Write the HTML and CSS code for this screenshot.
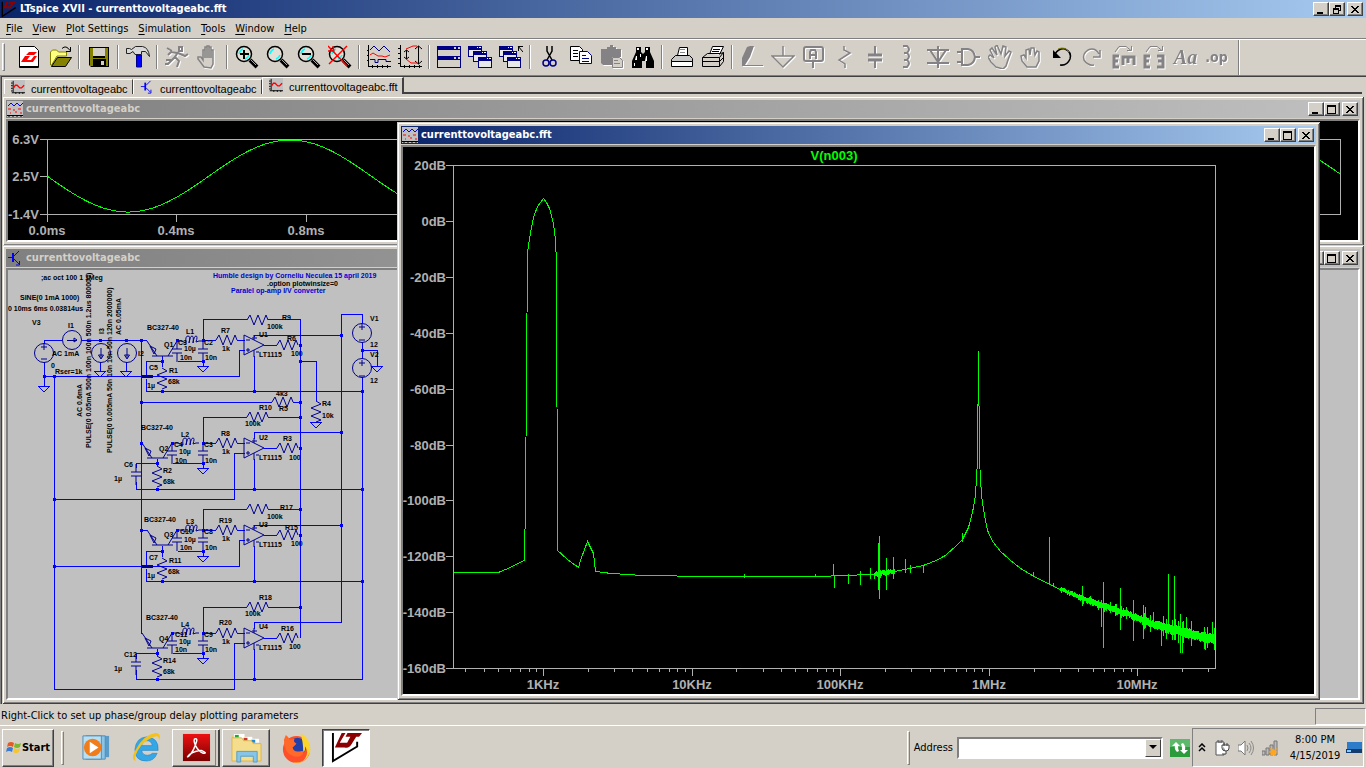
FILE: index.html
```html
<!DOCTYPE html>
<html lang="en">
<head>
<meta charset="utf-8">
<title>LTspice XVII - currenttovoltageabc.fft</title>
<link rel="stylesheet" href="styles.css">
</head>
<body>
<svg class="defs" aria-hidden="true">
  <defs>
    <symbol id="logo" viewBox="0 0 24 24"><path d="M2 1v22L22 10" fill="none" stroke="#000" stroke-width="2"/><path d="M8 1h3L8 8h5l-2 3H3zM12 1h11l-2 3h-2l-4 6q-2 2-4 1l4-7h-4z" fill="#8b0000"/></symbol>
    <symbol id="trace" viewBox="0 0 16 16"><rect width="16" height="16" fill="#c0c0c0"/><path d="M2.500 1v13M0 3.500h2M0 6.500h2M0 9.500h2M0 12.500h2M1 14.500h15M5.500 14v2M9.500 14v2M13.500 14v2" stroke="#000" fill="none"/><path d="M3 9l2-3h2l3 3h2l3-3" stroke="red" stroke-width="1.500" fill="none"/></symbol>
    <symbol id="multi" viewBox="0 0 16 16"><rect width="16" height="16" fill="#c0c0c0"/><path d="M1 5l3-3 3 3 3-3 3 3 3-3" stroke="#00f" fill="none"/><path d="M1 8h3M6 9h2M11 8h3M3 12h1M8 11h2M13 12h2" stroke="red" fill="none"/><path d="M0 14.500h16M2 14v2M6 14v2M10 14v2M14 14v2" stroke="#000"/></symbol>
    <symbol id="npn" viewBox="0 0 16 16"><path d="M1 7.500h5M7 6l5-5M7 9l5 5M12.500 11v4H9" stroke="#00f" fill="none"/><path d="M6 3v9" stroke="#00f" stroke-width="2"/></symbol>
    <symbol id="lens" viewBox="0 0 24 24"><circle cx="9" cy="9" r="7.500" fill="#e4e0d8" stroke="#000" stroke-width="1.500"/><path d="M4 9q1-4 4-5M14 10q-1 3-4 4" stroke="#0ff" stroke-width="1.500" fill="none"/><path d="M15 15l7 7" stroke="#000" stroke-width="4"/><path d="M16 15l5 5" stroke="#aaa"/></symbol>
    <symbol id="pane" viewBox="0 0 14 12"><path d="M0 0h14v11H0z" fill="#000084"/><path d="M1 4h12v6H1z" fill="#e8e8e8"/><path d="M9 1h1v1H9zM11 1h2v1h-2z" fill="#fff"/></symbol>
    <symbol id="min" viewBox="0 0 10 9"><path d="M1 7h6v2H1z"/></symbol>
    <symbol id="max" viewBox="0 0 10 9"><path d="M0 0h9v9H0zM1 2v6h7V2z" fill-rule="evenodd"/></symbol>
    <symbol id="restore" viewBox="0 0 10 9"><path d="M3 0h6v6H7V5h1V2H4v1H3zM1 3h6v6H1zM2 5v3h4V5z" fill-rule="evenodd"/></symbol>
    <symbol id="close" viewBox="0 0 10 9"><path d="M1 1h2v1h1v1h2V2h1V1h2v1H8v1H7v1H6v1h1v1h1v1h1v1H7V7H6V6H4v1H3v1H1V7h1V6h1V5h1V4H3V3H2V2H1z"/></symbol>

    <path id="rh" d="M0 0L3 -5L7 5L11 -5L15 5L19 -5L21 0"/>
    <path id="rv" d="M0 0L5 3L-5 7L5 11L-5 15L5 19L0 21"/>
    <path id="gnd" d="M-6 0h12l-6 6z"/>
    <path id="cap" d="M0 0v8M-5 8h10M-5 12h10M0 12v9"/>
    <path id="coil" d="M0 0h4l5 2q-1-7 2-7t1 7q1-7 3-7t1 7q1-7 3-7t0 6l3-1h3"/>
    <g id="amp"><path d="M0 -10V10L20 0zM2 -5h4M2 5h4M4 3v4M10 -10v5M8 -7h5M10 5v7M12 7h3"/></g>
    <g id="pnp"><path d="M0 0l10 15M5 15h21M21 15l9-15M3 5l6 3-2 5z"/></g>
    <path id="dot" d="M-1 -1h3v3h-3z"/>
  </defs>
</svg>

<div class="screen">
  <header class="titlebar app-title">
    <svg class="title-icon"><use href="#logo"/></svg>
    <h1>LTspice XVII - currenttovoltageabc.fft</h1>
    <div class="controls">
      <button aria-label="Minimize"><svg><use href="#min"/></svg></button><button aria-label="Restore"><svg><use href="#restore"/></svg></button><button aria-label="Close"><svg><use href="#close"/></svg></button>
    </div>
  </header>

  <nav class="menubar">
    <button><u>F</u>ile</button><button><u>V</u>iew</button><button><u>P</u>lot Settings</button><button><u>S</u>imulation</button><button><u>T</u>ools</button><button><u>W</u>indow</button><button><u>H</u>elp</button>
  </nav>

  <div class="toolbar" role="toolbar">
    <span class="grip"></span>
    <button aria-label="New"><svg viewBox="0 0 24 24"><path d="M2.500 1.500h15l4 4v17h-19z" fill="#fff" stroke="#000"/><path d="M3 21.500h18" stroke="#000"/><path d="M4 17l4-6h5l-3 4h4l3-4h3l-4 6zM9 10l3-3h8l-3 3z" fill="red"/></svg></button>
    <button aria-label="Open"><svg viewBox="0 0 24 24"><path d="M2.500 20V7l2-2h4l2 2h8v4H9L3 21" fill="#ffff80" stroke="#848200"/><path d="M3.500 21.500l6-9h14l-6 9z" fill="#848200" stroke="#000"/><path d="M14 3.500q4-4 8 2M22.500 2v4.500H18" fill="none" stroke="#000"/></svg></button>
    <span class="sep"></span>
    <button aria-label="Save"><svg viewBox="0 0 24 24"><path d="M2 2h20v20H4l-2-2z" fill="#000"/><path d="M3 3h3v10h12V3h3v18H3z" fill="#848200"/><path d="M6 3h12v8H6z" fill="#d4d0c8"/><path d="M6 14h13v7H6z"/><path d="M14 16h3v4h-3z" fill="#d4d0c8"/></svg></button>
    <span class="sep"></span>
    <button aria-label="Control panel"><svg viewBox="0 0 24 24"><path d="M.5 3.500h3l2 1 4-3h7q6 1 7 10l-4-5h-4v3H9l-2-3-3 2H.5z" fill="#d8d8d8" stroke="#222"/><path d="M10.500 10v12h5V10z" fill="#00f" stroke="#000084"/></svg></button>
    <span class="sep"></span>
    <button class="off" aria-label="Run"><svg viewBox="0 0 24 24"><path d="M14 2h3v4h-3zM13 7l-3 5 4 4-2 6M10 12l-7 7H0M13 8l7 3 3-2M12 8L6 7 3 10M2 3l5 3M1 15h5" stroke="#848284" stroke-width="2" fill="none"/></svg></button>
    <button class="off" aria-label="Halt"><svg viewBox="0 0 24 24"><path d="M8 22L2 14v-2h3l2 3V5h2v8V2h2v11V1h2v12V2h2v11V5h2v14l-2 4z" fill="#d4d0c8" stroke="#848284" stroke-width="1.500"/></svg></button>
    <span class="sep"></span>
    <button aria-label="Zoom in"><svg viewBox="0 0 24 24"><use href="#lens"/><path d="M5 9h9M9 5v9" stroke="#000" stroke-width="2"/></svg></button>
    <button aria-label="Zoom area"><svg viewBox="0 0 24 24"><use href="#lens"/></svg></button>
    <button aria-label="Zoom out"><svg viewBox="0 0 24 24"><use href="#lens"/><path d="M5 9h9" stroke="#000" stroke-width="2"/></svg></button>
    <button aria-label="Zoom full"><svg viewBox="0 0 24 24"><use href="#lens"/><path d="M0 1l19 20M19 1L1 19M0 6h6M5 1l1 6" stroke="red" stroke-width="1.500" fill="none"/></svg></button>
    <span class="sep"></span>
    <button aria-label="Autorange"><svg viewBox="0 0 24 24"><path d="M1.500 0v22M1 21.500h23M0 5.500h2M0 10.500h2M0 15.500h2M5.500 20v3M10.500 20v3M15.500 20v3M20.500 20v3" stroke="#000" fill="none"/><path d="M3 5l4-4 5 5 5-5 6 6M3 14.500h5v3h3v-3h8v2h5" stroke="#000084" fill="none"/><path d="M3 10l3-2 5 3h4l3 1 5-2" stroke="red" fill="none"/></svg></button>
    <button aria-label="Plot limits"><svg viewBox="0 0 24 24"><path d="M2.500 0v22M2 21.500h22M0 3.500h2M0 8.500h2M0 13.500h2M0 18.500h2M6.500 20v3M11.500 20v3M16.500 20v3M21.500 20v3M8.500 5v9M6 7l2.500-2L11 7M6 12l2.500 2 2.500-2M20.500 1v18M17 4l3.500-3L24 4M17 16l3.500 3 3.500-3" stroke="#000" fill="none"/><path d="M8 4l7-3h4M8 14l5 4h6" stroke="red" fill="none"/></svg></button>
    <span class="sep"></span>
    <button aria-label="Tile"><svg viewBox="0 0 24 24"><path d="M0 1h24v22H0z" fill="#000084"/><path d="M1 5h22v6H1zM1 15h22v7H1zM17 2h2v2h-2zM21 2h2v2h-2zM17 12h2v2h-2zM21 12h2v2h-2z" fill="#d4d0c8"/></svg></button>
    <button aria-label="Cascade"><svg viewBox="0 0 24 24"><use href="#pane" y="1" width="14" height="12"/><use href="#pane" x="5" y="6" width="14" height="12"/><use href="#pane" x="10" y="12" width="14" height="12"/></svg></button>
    <button aria-label="Close all"><svg viewBox="0 0 24 24"><use href="#pane" y="1" width="14" height="12"/><use href="#pane" x="4" y="6" width="14" height="12"/><use href="#pane" x="8" y="12" width="14" height="12"/><path d="M19.500 6V1.500H24M19 1l5 6" stroke="#000" fill="none"/></svg></button>
    <span class="sep"></span>
    <button aria-label="Cut"><svg viewBox="0 0 24 24"><path d="M9 1v5l5 9M14 1v5l-5 9" stroke="#000" stroke-width="1.500" fill="none"/><circle cx="8" cy="18" r="3" fill="none" stroke="#000084" stroke-width="1.500"/><circle cx="15" cy="18" r="3" fill="none" stroke="#000084" stroke-width="1.500"/></svg></button>
    <button aria-label="Copy"><svg viewBox="0 0 24 24"><path d="M1.500 1.500h9l3 3v11h-12z" fill="#fff" stroke="#000"/><path d="M4 5.500h5M4 8.500h5M4 11.500h5" stroke="#000"/><path d="M10.500 6.500h8l4 4v8h-12z" fill="#fff" stroke="#000084"/><path d="M13 10.500h4M13 13.500h7M13 16.500h7" stroke="#000084"/></svg></button>
    <button class="off" aria-label="Paste"><svg viewBox="0 0 24 24"><path d="M1 4h6V2h3V0h3v2h3v2h5v8h-9v8H3l-2-2z" fill="#848284"/><path d="M12.500 12.500h7l3 3v7h-10z" fill="#d4d0c8" stroke="#848284"/><path d="M14 15.500h4M14 18.500h6" stroke="#848284"/></svg></button>
    <button aria-label="Find"><svg viewBox="0 0 24 24"><path d="M5 2h5v5l2 2 2-2V2h5v5l4 9v7h-8v-7h-4v7H1v-7l4-9z" fill="#000"/><path d="M6 3h2v2H6zM15 3h2v2h-2zM5 11h1v4H4zM15 11h1v5h-2zM9 9h1v3H9zM3 18h1v3H3z" fill="#fff"/></svg></button>
    <span class="sep"></span>
    <button aria-label="Print setup"><svg viewBox="0 0 24 24"><path d="M7.500 10.500l2-8h8v8" fill="#fff" stroke="#000"/><path d="M1.500 14.500l4-4h14l3 3v5h-21z" fill="#c8c8c8" stroke="#000"/><path d="M1.500 16.500h21v5h-21z" fill="#fff" stroke="#000"/><path d="M10 4.500h5M10 7.500h5" stroke="#888"/></svg></button>
    <button aria-label="Print"><svg viewBox="0 0 24 24"><path d="M8.500 9.500l3-8h11l-4 8" fill="#fff" stroke="#000"/><path d="M1.500 12.500l5-4h13l3-1v9l-4 5h-17zM1.500 12.500h17l4-5M18.500 12.500v9M1.500 16.500h17l4-4" fill="#d4d0c8" stroke="#000"/><path d="M11 18.500h5" stroke="#e8e800"/><path d="M12 4.500h7M11 6.500h7" stroke="#000"/></svg></button>
    <span class="sep"></span>
    <button class="off" aria-label="Wire"><svg viewBox="0 0 24 24"><path d="M2 20V13L7 2l3-1h4l-4 11-5 8z" fill="#848284"/><path d="M2 20.500h21" stroke="#848284"/></svg></button>
    <button class="off" aria-label="Ground"><svg viewBox="0 0 24 24"><path d="M12 1v10M1 11h22L12 22z" fill="none" stroke="#848284" stroke-width="1.500"/></svg></button>
    <button class="off" aria-label="Label net"><svg viewBox="0 0 24 24"><rect x="2" y="2" width="19" height="14" rx="2" fill="none" stroke="#848284" stroke-width="2"/><path d="M11 16v7M8 14V7l1-2h4l1 2v7M8 10h6" fill="none" stroke="#848284" stroke-width="2"/></svg></button>
    <button class="off" aria-label="Resistor"><svg viewBox="0 0 24 24"><path d="M11 1v4l6 3-11 7 6 4v4" fill="none" stroke="#848284" stroke-width="1.500"/></svg></button>
    <button class="off" aria-label="Capacitor"><svg viewBox="0 0 24 24"><path d="M11 1v9M11 15v8" stroke="#848284" stroke-width="2"/><path d="M4 10h14M4 15h14" stroke="#848284" stroke-width="3"/></svg></button>
    <button class="off" aria-label="Inductor"><svg viewBox="0 0 24 24"><path d="M8 1h4q4 3 0 7H9h3q4 3 0 7H9h3q4 3 0 7H8" fill="none" stroke="#848284" stroke-width="2"/></svg></button>
    <button class="off" aria-label="Diode"><svg viewBox="0 0 24 24"><path d="M12 1v22M1 5h22M4 5l8 12 8-12M1 18h22" fill="none" stroke="#848284" stroke-width="2"/></svg></button>
    <button class="off" aria-label="Component"><svg viewBox="0 0 24 24"><path d="M0 7h6M0 17h6M5 4h6q6 1 7 8-1 7-7 8H5zM18 12h5" fill="none" stroke="#848284" stroke-width="2"/></svg></button>
    <button class="off" aria-label="Move"><svg viewBox="0 0 24 24"><path d="M8 22L3 17 0 12l2-2 4 3L2 5l2-2 5 7L7 2l2-2 4 9 2-8 3 1-1 9 4-5 2 1-3 8-2 6-3 3z" fill="none" stroke="#848284" stroke-width="1.500"/></svg></button>
    <button class="off" aria-label="Drag"><svg viewBox="0 0 24 24"><path d="M8 22l-5-6-1-5 3-1 2 3V5l3-1 1 6 1-7h3l1 7 2-4 2 1v9l-3 6z" fill="none" stroke="#848284" stroke-width="1.500"/></svg></button>
    <button aria-label="Undo"><svg viewBox="0 0 24 24"><path d="M5 9q4-6 10-5 7 3 5 10-3 7-10 6" fill="none" stroke="#000" stroke-width="1.500"/><path d="M8 4q7-3 11 3" fill="none" stroke="#848200"/><path d="M3 5v8h8z"/></svg></button>
    <button class="off" aria-label="Redo"><svg viewBox="0 0 24 24"><path d="M18 9q-4-7-11-4-6 4-4 10 4 6 10 5M19 5v7h-7" fill="none" stroke="#848284" stroke-width="1.500"/></svg></button>
    <button class="off" aria-label="Rotate"><svg viewBox="0 0 24 24"><path d="M7 11H2v11h5M2 16h4M11 20v-8h11v8M16 12v6" fill="none" stroke="#848284" stroke-width="3"/><path d="M3 7l4-5.500h7l5 4M19.500 1v4.500H15" fill="none" stroke="#848284"/></svg></button>
    <button class="off" aria-label="Mirror"><svg viewBox="0 0 24 24"><path d="M7 11H2v11h5M2 16h4M14 11h6v11h-6M20 16h-5" fill="none" stroke="#848284" stroke-width="3"/><path d="M3 7l4-5.500h7l5 4M19.500 1v4.500H15" fill="none" stroke="#848284"/></svg></button>
    <button class="off tool-text" aria-label="Text">Aa</button>
    <button class="off tool-op" aria-label="SPICE directive">.op</button>
    <span class="end"></span>
  </div>

  <main class="workspace">
    <div class="tabs" role="tablist">
      <button role="tab"><svg><use href="#trace"/></svg><span>currenttovoltageabc</span></button>
      <button role="tab"><svg><use href="#npn"/></svg><span>currenttovoltageabc</span></button>
      <button role="tab" class="active" aria-selected="true"><svg><use href="#trace"/></svg><span>currenttovoltageabc.fft</span></button>
      <span class="tab-rest"></span>
    </div>

    <div class="mdi">
      <section class="window wave">
        <div class="titlebar inactive"><svg class="title-icon"><use href="#multi"/></svg><h2>currenttovoltageabc</h2>
          <div class="controls"><button aria-label="Minimize"><svg><use href="#min"/></svg></button><button aria-label="Maximize"><svg><use href="#max"/></svg></button><button aria-label="Close"><svg><use href="#close"/></svg></button></div></div>
        <div class="client black">
          <svg class="plot" viewBox="8 121 1350 119" preserveAspectRatio="xMinYMin meet">
            <path class="axis" d="M40 139.500H1340.500V214.500H40M47.500 139V222M40 176.500h7M176.500 214v8M306.500 214v8"/>
            <path class="signal" id="sine"/>
            <text x="39" y="144" text-anchor="end">6.3V</text><text x="39" y="181" text-anchor="end">2.5V</text><text x="39" y="219" text-anchor="end">-1.4V</text>
            <text x="47" y="235" text-anchor="middle">0.0ms</text><text x="176" y="235" text-anchor="middle">0.4ms</text><text x="306" y="235" text-anchor="middle">0.8ms</text>
          </svg>
        </div>
      </section>

      <section class="window schem">
        <div class="titlebar inactive"><svg class="title-icon"><use href="#npn"/></svg><h2>currenttovoltageabc</h2>
          <div class="controls"><button aria-label="Minimize"><svg><use href="#min"/></svg></button><button aria-label="Maximize"><svg><use href="#max"/></svg></button><button aria-label="Close"><svg><use href="#close"/></svg></button></div></div>
        <div class="client grey">
          <svg class="circuit" viewBox="8 270 1350 428" preserveAspectRatio="xMinYMin meet">
            <g class="wire">
              <path d="M44.500 344V340.500H62M82 340.500H147M44.500 362V386M44.500 376.500H239.500V350.500H245M54.500 376V689.500H234.500V643.500H245M54.500 499.500H234.500V453.500H245M54.500 566.500H239.500V540.500H245M141.500 340V634M300.500 319V638M341.500 622.500V314.500H362.500V323M362.500 342V359M362.500 377V679.500M362.500 350.500H377.500V366M300.500 361.500H316.500V401M141.500 402.500H272M293 402.500H300M100.500 362V371M126.500 362V371"/>
              <path d="M203.500 340V319.500H247M268 319.500H300.500M203 340.500H216M237 340.500H245M264 345.500H277M254.500 336.500V335.500H341.500M254.500 356V391.500M146.500 379V391.500H362.500M162.500 356V367M162.500 361.500H146.500V376M177.500 361.500H203.500V366"/>
              <path d="M203.500 443V417.500H247M268 417.500H300.500M203 443.500H216M237 443.500H245M264 448.500H277M254.500 439V432.500H341.500M254.500 459V489.500M136.500 482V489.500H362.500M157.500 459V466M157.500 463.500H136.500V468M172.500 463.500H203.500V469"/>
              <path d="M203.500 530V509.500H247M268 509.500H300.500M203 530.500H216M237 530.500H245M264 535.500H277M254.500 527V525.500H341.500M254.500 546V581.500M146.500 569V581.500H362.500M162.500 546V557M162.500 551.500H146.500V566M177.500 551.500H203.500V556M141.500 530.500H147"/>
              <path d="M203.500 633V607.500H247M268 607.500H300.500M203 633.500H216M237 633.500H245M264 638.500H277M254.500 629V622.500H341.500M254.500 649V679.500M136.500 670V679.500H362.500M157.500 649V656M157.500 653.500H136.500V659M172.500 653.500H203.500V658"/>
              <use href="#gnd" x="44" y="386"/><use href="#gnd" x="100" y="371"/><use href="#gnd" x="126" y="371"/><use href="#gnd" x="377" y="366"/><use href="#gnd" x="316" y="422"/>
              <use href="#gnd" x="203" y="366"/><use href="#gnd" x="203" y="468"/><use href="#gnd" x="203" y="556"/><use href="#gnd" x="203" y="658"/>
            </g>
            <g class="part">
              <circle cx="44" cy="353" r="9.500"/><circle cx="72" cy="340" r="9.500"/><circle cx="101" cy="353" r="9.500"/><circle cx="127" cy="353" r="9.500"/><circle cx="362" cy="333" r="9.500"/><circle cx="362" cy="368" r="9.500"/>
              <path d="M41 347h6M44 344v6M41 359h6M67 340.500h10M74 338l3 2-3 2zM101 348v10M98.500 355h5l-2.500 4zM127 348v10M124.500 355h5l-2.500 4zM359 327h6M362 324v6M359 340h6M359 363h6M362 360v6M359 376h6M142 375.500h11M142 376.500h11M142 377.500h11M142 565.500h11M142 566.500h11M142 567.500h11"/>
              <use href="#rh" x="247" y="320"/><use href="#rh" x="216" y="340"/><use href="#rh" x="277" y="345"/><use href="#rh" x="272" y="402"/><use href="#rv" x="316" y="401"/>
              <use href="#rh" x="247" y="417"/><use href="#rh" x="216" y="443"/><use href="#rh" x="277" y="448"/>
              <use href="#rh" x="247" y="509"/><use href="#rh" x="216" y="530"/><use href="#rh" x="277" y="535"/>
              <use href="#rh" x="247" y="607"/><use href="#rh" x="216" y="633"/><use href="#rh" x="277" y="638"/>
              <use href="#rv" x="162" y="368"/><use href="#rv" x="157" y="466"/><use href="#rv" x="162" y="558"/><use href="#rv" x="157" y="656"/>
              <use href="#amp" x="244" y="345"/><use href="#amp" x="244" y="448"/><use href="#amp" x="244" y="535"/><use href="#amp" x="244" y="638"/>
              <use href="#pnp" x="147" y="341"/><use href="#pnp" x="142" y="443"/><use href="#pnp" x="147" y="530"/><use href="#pnp" x="142" y="633"/>
              <use href="#cap" x="177" y="341"/><use href="#cap" x="203" y="341"/><use href="#cap" x="172" y="443"/><use href="#cap" x="203" y="443"/>
              <use href="#cap" x="177" y="530"/><use href="#cap" x="203" y="530"/><use href="#cap" x="172" y="633"/><use href="#cap" x="203" y="633"/>
              <use href="#cap" x="136" y="464"/><use href="#cap" x="136" y="654"/>
              <use href="#coil" x="177" y="341"/><use href="#coil" x="174" y="443"/><use href="#coil" x="177" y="530"/><use href="#coil" x="174" y="633"/>
            </g>
            <g class="node" id="nodes"></g>
            <g class="note">
              <text x="213" y="278">Humble design by Corneliu Neculea 15 april 2019</text>
              <text x="231" y="293">Paralel op-amp I/V converter</text>
            </g>
            <g class="label">
              <text x="41" y="280">;ac oct 100 1 1Meg</text><text x="267" y="286">.option plotwinsize=0</text>
              <text x="20" y="300">SINE(0 1mA 1000)</text><text x="8" y="311">0 10ms 6ms 0.03814us</text>
              <text x="32" y="325">V3</text><text x="68" y="328">I1</text><text x="52" y="356">AC 1mA</text><text x="51" y="368">0</text><text x="55" y="374">Rser=1k</text><text x="138" y="356">I2</text>
              <text transform="translate(82 417) rotate(-90)">AC 0.6mA</text>
              <text transform="translate(91 448) rotate(-90)">PULSE(0 0.05mA 500n 100n 100n 500n 1.2us 800000)</text>
              <text transform="translate(104 334) rotate(-90)">I3</text>
              <text transform="translate(112 453) rotate(-90)">PULSE(0 0.005mA 50n 10n 10n 50n 120n 2000000)</text>
              <text transform="translate(121 335) rotate(-90)">AC 0.05mA</text>
              <text x="147" y="330">BC327-40</text><text x="186" y="334">L1</text><text x="164" y="347">Q1</text><text x="178" y="345">C3</text><text x="184" y="351">10µ</text><text x="180" y="360">10n</text><text x="204" y="345">C2</text><text x="205" y="360">10n</text><text x="149" y="370">C5</text><text x="147" y="388">1µ</text><text x="169" y="373">R1</text><text x="168" y="384">68k</text>
              <text x="282" y="320">R9</text><text x="267" y="329">100k</text><text x="221" y="333">R7</text><text x="222" y="351">1k</text><text x="259" y="337">U1</text><text x="287" y="341">R6</text><text x="291" y="356">100</text><text x="259" y="357">LT1115</text>
              <text x="370" y="321">V1</text><text x="370" y="347">12</text><text x="370" y="357">V2</text><text x="370" y="383">12</text><text x="276" y="396">4k3</text><text x="279" y="411">R5</text><text x="322" y="406">R4</text><text x="322" y="418">10k</text>
              <text x="141" y="430">BC327-40</text><text x="181" y="437">L2</text><text x="159" y="451">Q2</text><text x="174" y="447">C4</text><text x="179" y="454">10µ</text><text x="175" y="463">10n</text><text x="204" y="447">C3</text><text x="205" y="463">10n</text><text x="124" y="467">C6</text><text x="114" y="481">1µ</text><text x="163" y="473">R2</text><text x="163" y="484">68k</text>
              <text x="259" y="410">R10</text><text x="245" y="426">100k</text><text x="221" y="436">R8</text><text x="222" y="454">1k</text><text x="259" y="440">U2</text><text x="283" y="441">R3</text><text x="289" y="460">100</text><text x="259" y="460">LT1115</text>
              <text x="144" y="522">BC327-40</text><text x="186" y="524">L3</text><text x="164" y="537">Q3</text><text x="180" y="534">C10</text><text x="184" y="542">10µ</text><text x="180" y="550">10n</text><text x="204" y="534">C8</text><text x="205" y="550">10n</text><text x="149" y="560">C7</text><text x="147" y="578">1µ</text><text x="169" y="563">R11</text><text x="168" y="574">68k</text>
              <text x="280" y="510">R17</text><text x="267" y="519">100k</text><text x="219" y="523">R19</text><text x="222" y="541">1k</text><text x="259" y="527">U3</text><text x="285" y="530">R15</text><text x="291" y="546">100</text><text x="259" y="547">LT1115</text>
              <text x="146" y="620">BC327-40</text><text x="181" y="627">L4</text><text x="159" y="641">Q4</text><text x="175" y="637">C11</text><text x="179" y="644">10µ</text><text x="175" y="652">10n</text><text x="204" y="637">C9</text><text x="205" y="652">10n</text><text x="124" y="657">C12</text><text x="114" y="671">1µ</text><text x="163" y="663">R14</text><text x="163" y="674">68k</text>
              <text x="259" y="600">R18</text><text x="245" y="616">100k</text><text x="219" y="625">R20</text><text x="222" y="644">1k</text><text x="259" y="629">U4</text><text x="281" y="631">R16</text><text x="289" y="649">100</text><text x="259" y="650">LT1115</text>
            </g>
          </svg>
        </div>
      </section>

      <section class="window fft">
        <div class="titlebar"><svg class="title-icon"><use href="#multi"/></svg><h2>currenttovoltageabc.fft</h2>
          <div class="controls"><button aria-label="Minimize"><svg><use href="#min"/></svg></button><button aria-label="Maximize"><svg><use href="#max"/></svg></button><button aria-label="Close"><svg><use href="#close"/></svg></button></div></div>
        <div class="client black">
          <svg class="plot" viewBox="403 147 911 547">
            <path class="axis" id="axes"/>
            <path class="signal" id="spectrum"/>
            <text class="trace-name" x="834" y="160" text-anchor="middle">V(n003)</text>
            <g id="levels"></g>
            <text x="543" y="689" text-anchor="middle">1KHz</text><text x="692" y="689" text-anchor="middle">10KHz</text><text x="840" y="689" text-anchor="middle">100KHz</text><text x="989" y="689" text-anchor="middle">1MHz</text><text x="1137" y="689" text-anchor="middle">10MHz</text>
          </svg>
        </div>
      </section>
    </div>
  </main>

  <div class="status"><span>Right-Click to set up phase/group delay plotting parameters</span><span class="status-cell"></span></div>

  <footer class="taskbar">
    <button class="start"><svg viewBox="0 0 16 16"><path d="M2 3q3-2 6 0L7 7Q4 5 1 7z" fill="#e85a24"/><path d="M9 3q3 2 6 0l-1 4q-3 2-6 0z" fill="#7db72f"/><path d="M1 8q3-2 6 0l-1 4q-3-2-6 0z" fill="#3a7bd5"/><path d="M8 8q3 2 6 0l-1 4q-3 2-6 0z" fill="#f7c52c"/></svg>Start</button>
    <span class="divider"></span>
    <div class="apps">
      <button aria-label="Media Player"><svg viewBox="0 0 32 32"><path d="M8 4h21v22H8z" fill="#5b9bc8"/><path d="M5 4h20v24H5z" fill="#8dc3e4" stroke="#4d8db8"/><path d="M2 4h19v24H2z" fill="#b9dff3" stroke="#4d8db8"/><circle cx="12" cy="16" r="9" fill="#f07c1a"/><path d="M9 10l9 6-9 6z" fill="#fff"/></svg></button>
      <button aria-label="Internet Explorer"><svg viewBox="0 0 32 32"><path d="M28 19H11q1 5 6 5 3 0 5-2h5q-3 8-11 8Q4 30 4 18 5 6 16 5q13 1 12 14M11 14h11q-1-5-5.500-5T11 14" fill="#35a7e6" fill-rule="evenodd" stroke="#1879bd" stroke-width=".5"/><path d="M5 30q-6-2 0-12Q13 3 25 1q7 0 4 8 0-6-5-4Q13 9 7 19q-4 7-2 11" fill="#f5c21b"/></svg></button>
      <button class="raised stack" aria-label="Adobe Reader"><svg viewBox="0 0 32 32"><defs><linearGradient id="red" x2="0" y2="1"><stop stop-color="#ee1111"/><stop offset="1" stop-color="#780000"/></linearGradient></defs><path d="M2 2h28v28H2z" fill="url(#red)"/><path d="M15 7q-3 0 0 7 3 6 8 8 5 0-2-3-6 0-12 4-4 4-1 2 5-5 8-15 1-3-1-3" fill="none" stroke="#fff" stroke-width="1.500"/></svg></button>
      <button class="raised" aria-label="Explorer"><svg viewBox="0 0 32 32"><path d="M1 4h14v24H1z" fill="#e9cc72"/><path d="M3 2h11v5H3z" fill="#fff"/><path d="M4 3h4v3H4z" fill="#2a2"/><path d="M12 5h10v4H12z" fill="#fff"/><path d="M13 6h4v3h-4z" fill="#c33"/><path d="M20 7h9v4h-9z" fill="#fff"/><path d="M21 8h4v3h-4z" fill="#28c"/><path d="M1 6h10l2 3h8l2 3h8v18H1z" fill="#f4dd8c" stroke="#d9b656"/><path d="M6 31V20h21v11h-4v-6H10v6z" fill="#86c5e8" stroke="#579fc8"/></svg></button>
      <button aria-label="Firefox"><svg viewBox="0 0 32 32"><circle cx="16" cy="18" r="14" fill="#ff4f2a"/><circle cx="17" cy="15" r="9" fill="#2440a8"/><path d="M20 1q12 7 10 20-6 14-18 10 9 2 13-4 4-6 0-12 0 5-2 6 0-11-3-20" fill="#ffd42a"/><path d="M3 8l2-5q3 2 4 5l5-1q-2 3 2 5l-4 4q1 5 7 4 3-1 5 0-3 7-11 5Q3 22 3 8" fill="#ff6a2a"/></svg></button>
      <button class="pressed" aria-label="LTspice"><svg viewBox="0 0 32 32"><path d="M2 1v29L27 15V10" fill="none" stroke="#000" stroke-width="2"/><path d="M11 1h4L9 11h8l-2 5H4zM17 1h15l-3 4h-3l-5 8q-2 4-7 3l6-11h-5z" fill="#8b0000"/></svg></button>
    </div>
    <span class="divider far"></span>
    <label for="address">Address</label>
    <div class="combo"><input id="address" type="text"><button aria-label="Show addresses"><svg viewBox="0 0 8 8"><path d="M0 2h8L4 6z"/></svg></button></div>
    <button class="go" aria-label="Go"><svg viewBox="0 0 20 18"><path d="M0 0h20v18H0z" fill="#2c9b3c"/><path d="M0 0h20v8H0z" fill="#5cb86a"/><path d="M7 13Q4 10 5 7H2l4-4 4 4H8q0 3 1 5zM13 4q3 3 2 7h3l-4 4-4-4h2q0-4-1-6z" fill="#fff"/></svg></button>
    <div class="tray">
      <svg class="chev" viewBox="0 0 8 10"><path d="M1 4l3-3 3 3M1 8l3-3 3 3" fill="none" stroke="#000" stroke-width="1.500"/></svg>
      <svg viewBox="0 0 16 16"><path d="M2 2h8v13H2zM4 0h4v2H4z" fill="#fff" stroke="#555"/><path d="M8 5h7v3q0 3-3 3v3H8M10 3v3M13 3v3M8 5v3q0 3 4 3" fill="#fff" stroke="#444"/></svg>
      <svg viewBox="0 0 16 16"><path d="M0 5h3l4-4v14l-4-4H0z" fill="#fff" stroke="#777"/><path d="M9 5q2 3 0 6M11 3q4 5 0 10M13 1q5 7 0 14" fill="none" stroke="#888"/></svg>
      <svg viewBox="0 0 16 16"><path d="M0 11h3v4H0zM4 8h3v7H4zM8 5h3v10H8zM12 1h3v14h-3z" fill="#bbb" stroke="#777"/><path d="M11 7l1 3 3-2-1 3 2 1-3 1 1 3-3-1-3 1 1-3-3-1 3-1-1-3 3 1z" fill="#ffa51f"/></svg>
      <time>8:00 PM<br>4/15/2019</time>
      <svg viewBox="0 0 16 16"><path d="M1 2h15v8H1z" fill="#2d7cc9"/><path d="M0 9h16v4H0z" fill="#143d6e"/><path d="M1 10h4v2H1z" fill="#8cf"/></svg>
    </div>
  </footer>
</div>
<script src="app.js"></script>
</body>
</html>
```
FILE: styles.css
```css
:root { --face: #d4d0c8; --shade: #808080; --dark: #404040; --ui: "DejaVu Sans Condensed", "Noto Sans", sans-serif; }
* { box-sizing: border-box; }
html, body { margin: 0; height: 100%; }
body { background: var(--face); color: #000; font: 11px/14px var(--ui); overflow: hidden; }
button { font: inherit; color: inherit; background: none; border: 0; padding: 0; margin: 0; }
h1, h2 { margin: 0; font-size: 11px; line-height: 14px; font-weight: bold; }
.defs { position: absolute; width: 0; height: 0; }
.screen { height: 100vh; display: flex; flex-direction: column; }

.titlebar { height: 18px; flex: none; display: flex; align-items: center; gap: 3px; padding: 0 2px 0 1px; color: #fff; background: linear-gradient(90deg, #0a246a, #a6caf0); }
.titlebar.inactive { color: var(--face); background: linear-gradient(90deg, #808080, #c0c0c0); }
.app-title { padding-right: 3px; }
.title-icon { width: 16px; height: 16px; flex: none; }
.controls { margin-left: auto; display: flex; }
.controls button { width: 16px; height: 14px; display: flex; align-items: center; justify-content: center; background: var(--face); border: 1px solid; border-color: #fff var(--dark) var(--dark) #fff; box-shadow: inset -1px -1px var(--shade); }
.controls button:last-child { margin-left: 2px; }
.controls svg { width: 10px; height: 9px; shape-rendering: crispEdges; }

.menubar { height: 20px; flex: none; display: flex; align-items: center; padding: 1px 0 0 1px; }
.menubar button { padding: 0 5px; }
.menubar u { text-underline-offset: 2px; }

.toolbar { height: 37px; flex: none; display: flex; align-items: center; border-top: 1px solid var(--shade); box-shadow: inset 0 1px #fff; }
.toolbar button { width: 31px; height: 26px; flex: none; display: flex; align-items: center; justify-content: center; }
.toolbar svg { width: 24px; height: 24px; }
.grip { width: 3px; height: 28px; margin: 0 8px 0 2px; border: 1px solid; border-color: #fff var(--shade) var(--shade) #fff; }
.sep { width: 8px; height: 24px; flex: none; background: linear-gradient(90deg, transparent 3px, var(--shade) 3px 4px, #fff 4px 5px, transparent 5px); }
.end { width: 2px; height: 35px; margin-left: 6px; border-left: 1px solid var(--shade); background: #fff; }
.off { filter: drop-shadow(1px 1px 0 #fff); color: #848284; }
.toolbar .tool-text { font: italic bold 20px/24px "Liberation Serif", serif; }
.toolbar .tool-op { font: bold 14px/22px "DejaVu Sans Condensed", sans-serif; }

.workspace { flex: 1; min-height: 0; display: flex; flex-direction: column; border: solid; border-width: 1px 0 0 1px; border-color: var(--shade); box-shadow: inset 1px 1px var(--dark); }
.tabs { height: 20px; flex: none; display: flex; align-items: flex-end; padding: 0 4px 2px 3px; font: 11px/14px "Liberation Sans", sans-serif; }
.tabs button { height: 15px; display: flex; align-items: flex-start; gap: 5px; padding: 0 5px; width: 129px; border: solid; border-width: 1px 1px 0 1px; border-color: #fff var(--dark) #fff #fff; white-space: nowrap; }
.tabs button span { padding-top: 2px; }
.tabs button svg { width: 16px; height: 14px; flex: none; }
.tabs .active { width: 142px; height: 17px; border-right-width: 2px; }
.tab-rest { flex: 1; border-bottom: 2px solid var(--dark); }

.mdi { position: relative; flex: 1; min-height: 0; margin-left: 1px; overflow: hidden; }
.window { position: absolute; display: flex; flex-direction: column; padding: 4px; background: var(--face); box-shadow: inset 1px 1px var(--face), inset -1px -1px var(--dark), inset 2px 2px #fff, inset -2px -2px var(--shade); }
.wave { left: 0; right: 2px; top: 0; height: 150px; }
.schem { left: 0; right: 2px; top: 149px; bottom: 0; }
.fft { left: 395px; right: 46px; top: 26px; bottom: 4px; }
.client { flex: 1; min-height: 0; margin-top: 1px; border: 2px solid; border-color: var(--shade) #fff #fff var(--shade); }
.black { background: #000; }
.grey { background: #c0c0c0; }
.client svg { display: block; width: 100%; height: 100%; }

.plot { font: bold 13px "Liberation Sans", sans-serif; fill: #b0b0b0; shape-rendering: crispEdges; }
.axis { fill: none; stroke: #b0b0b0; }
.signal { fill: none; stroke: #0f0; }
.trace-name { fill: #0f0; }
.circuit { font: bold 7px "Liberation Sans", sans-serif; }
.wire { fill: none; stroke: #00f; shape-rendering: crispEdges; }
.part { fill: none; stroke: #000090; }
.node { fill: #00f; }
.note { fill: #0000d0; }

.status { height: 21px; flex: none; display: flex; align-items: center; padding: 3px 0 0 1px; }
.status-cell { width: 51px; height: 17px; margin-left: auto; border: 1px solid; border-color: var(--shade) #fff #fff var(--shade); }

.taskbar { height: 43px; flex: none; display: flex; align-items: center; border-top: 1px solid #fff; padding: 2px 2px 1px; }
.start { width: 52px; height: 38px; display: flex; align-items: center; justify-content: center; font-weight: bold; }
.start svg { width: 16px; height: 16px; }
.start, .raised { border: 1px solid; border-color: #fff var(--dark) var(--dark) #fff; box-shadow: inset -1px -1px var(--shade); }
.divider { width: 3px; height: 34px; margin: 0 8px 0 7px; border: 1px solid; border-color: #fff var(--shade) var(--shade) #fff; }
.apps { display: flex; gap: 2px; }
.apps button { width: 48px; height: 38px; display: flex; align-items: center; justify-content: center; }
.apps svg { width: 31px; height: 31px; }
.apps .stack { box-shadow: inset -1px 0 var(--dark), inset -3px 0 var(--face), inset -4px 0 var(--shade), inset 0 -1px var(--shade); }
.apps .pressed { background: #fff; border: 1px solid; border-color: var(--dark) #fff #fff var(--dark); box-shadow: inset 1px 1px var(--shade); }
.far { margin: 0 4px 0 auto; }
.combo { width: 206px; height: 22px; display: flex; margin-left: 4px; border: 2px solid; border-color: var(--shade) #fff #fff var(--shade); background: #fff; }
.combo input { flex: 1; min-width: 0; border: 0; padding: 0 2px; outline: 0; font: inherit; background: #fff; }
.combo button { width: 16px; background: var(--face); border: 1px solid; border-color: #fff var(--dark) var(--dark) #fff; }
.combo button svg { width: 8px; height: 8px; }
.go { width: 22px; height: 20px; margin: 0 1px 0 6px; }
.go svg { display: block; width: 20px; height: 18px; margin: 1px; }
.tray { height: 39px; display: flex; align-items: center; gap: 8px; padding: 0 1px 0 5px; border: 1px solid; border-color: var(--shade) #fff #fff var(--shade); }
.tray svg { width: 16px; height: 16px; flex: none; }
.tray .chev { width: 8px; height: 10px; }
.tray time { width: 54px; text-align: center; line-height: 16px; margin: 0 -4px 0 2px; white-space: nowrap; }
```
FILE: app.js
```js
const el = id => document.getElementById(id);

// Time-domain trace: 1 kHz sine, 324 units per period.
let sine = "";
for (let x = 47; x <= 1340; x++) sine += (sine ? "L" : "M") + x + " " + (176 + 36 * Math.sin((x - 47) * 2 * Math.PI / 324)).toFixed(1);
el("sine").setAttribute("d", sine);

// Log-frequency axis with decade and minor ticks.
let axes = "M453.5 165.5H1215.5V668.5H453.5Z";
for (let f = 300, step = 100; f < 34e6; f += step) {
  if (f >= step * 10) step *= 10;
  const x = Math.round(543 + 148.6 * Math.log10(f / 1000)) + 0.5;
  axes += `M${x} 668v${f === step ? 8 : 4}`;
}
let levels = "";
for (let i = 0; i <= 9; i++) {
  const y = Math.round(165 + i * 55.9);
  axes += `M446 ${y + 0.5}h7`;
  levels += `<text x="446" y="${y + 5}" text-anchor="end">${20 - i * 20}dB</text>`;
}
el("axes").setAttribute("d", axes);
el("levels").innerHTML = levels;

// Spectrum: smooth envelope, discrete spurs and a noise floor.
const env = [[453,572],[498,572],[510,567],[524,560],[525,500],[527,252],[530,232],[533,217],[537,206],[540,202],[543,198],[546,202],[549,208],[553,223],[555,240],[556,262],[557,550],[568,560],[578,567],[580,560],[587,541],[593,553],[595,571],[610,573],[640,575],[700,576],[820,576],[872,574],[890,572],[905,569],[923,565],[936,560],[945,555],[954,547],[962,539],[968,527],[972,512],[975,495],[977,460],[978,351],[979,460],[981,495],[984,515],[987,530],[992,541],[1000,551],[1010,560],[1020,568],[1035,577],[1053,586],[1080,598],[1103,606],[1133,617],[1150,624],[1180,632],[1200,637],[1215,640]];
const at = x => {
  for (let i = 1; i < env.length; i++) if (x <= env[i][0]) {
    const [a, b] = env[i - 1], [c, d] = env[i];
    return b + (d - b) * (x - a) / (c - a);
  }
};
let d = "M" + env.map(([x, y]) => `${x + 0.5} ${y + 0.4}`).join("L");
const spurs = [[744,574,578],[815,574,577],[833,564,576],[834,576,588],[848,574,584],[860,571,585],[870,568,579],[878,543,590],[879,536,599],[880,572,578],[886,558,590],[893,557,579],[905,559,573],[910,565,573],[923,565,573],[962,533,542],[1033,572,577],[1049,537,585],[1053,583,587],[1061,587,593],[1082,586,606],[1101,600,627],[1103,582,648],[1120,588,630],[1123,608,617],[1133,600,641],[1143,605,639],[1145,607,628],[1153,612,627],[1161,622,646],[1163,616,636],[1168,574,632],[1174,576,640],[1180,614,653],[1182,622,653],[1186,617,636],[1191,621,646],[1205,634,650],[1207,628,642],[1212,622,640],[1214,632,649]];
spurs.forEach(([x, a, b]) => { d += `M${x + 0.5} ${a}V${b}`; });
let seed = 7;
const rnd = () => (seed = (seed * 16807) % 2147483647) / 2147483647;
for (let x = 874; x < 895; x++) d += `M${x + 0.5} ${at(x) - 1 - rnd() * 2}v${3 + rnd() * 3}`;
for (let x = 1078; x < 1112; x++) d += `M${x + 0.5} ${at(x) - 1 - rnd() * 3}v${2 + rnd() * 6}`;
for (let x = 1060; x < 1215; x++) {
  const g = Math.min(1, Math.max(0, (x - 1060) / 120));
  const peak = rnd() > 0.8 ? 6 * g : 0;
  d += `M${x + 0.5} ${at(x) - 1 - g * 3 - peak - rnd() * 2}v${2 + g * 6 + peak * 2 + rnd() * 2}`;
}
el("spectrum").setAttribute("d", d);

// Junction markers on the schematic.
const nodes = [[100,340],[126,340],[141,340],[177,340],[203,340],[44,376],[54,376],[162,361],[203,361],[162,391],[254,391],[362,391],[300,345],[300,361],[341,335],[362,350],[141,402],[300,402],[300,417],[141,443],[172,443],[203,443],[300,448],[341,432],[157,463],[203,463],[157,489],[254,489],[362,489],[54,499],[300,509],[141,530],[177,530],[203,530],[300,535],[341,525],[162,551],[203,551],[54,566],[162,581],[254,581],[362,581],[300,607],[172,633],[203,633],[157,653],[203,653],[157,679],[254,679]];
el("nodes").innerHTML = nodes.map(([x, y]) => `<use href="#dot" x="${x}" y="${y}"/>`).join("");
```
